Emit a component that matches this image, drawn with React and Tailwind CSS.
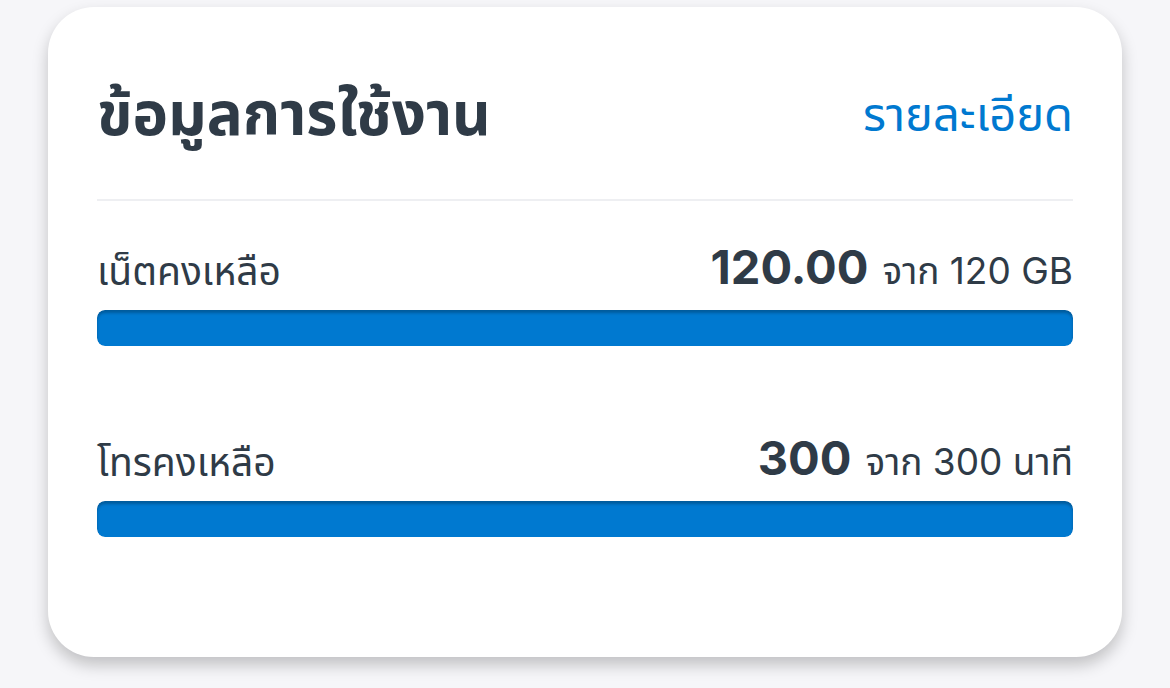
export default function App() {
  const rows = [
    { label: 'เน็ตคงเหลือ', value: '120.00', total: 'จาก 120 GB', pct: 100 },
    { label: 'โทรคงเหลือ', value: '300', total: 'จาก 300 นาที', pct: 100 },
  ];

  return (
    <div
      className="w-[1170px] h-[688px] bg-[#f6f6f9] pt-[7px] px-[48px] overflow-hidden"
      style={{ fontFamily: 'Inter, "Noto Sans Thai", "Noto Sans", sans-serif' }}
    >
      <div className="h-[650px] bg-white rounded-[46px] shadow-[0_8px_16px_rgba(0,0,0,0.22)] px-[49px]">
        <div className="flex items-center justify-between h-[194px] pt-[20px] border-b-2 border-[#eeeff2]">
          <h1 className="text-[60px] font-bold text-[#2f3b47] leading-none">ข้อมูลการใช้งาน</h1>
          <a className="text-[47px] text-[#0079d0] leading-none">รายละเอียด</a>
        </div>

        <div className="flex flex-col gap-[88px] pt-[42px]">
          {rows.map((r) => (
            <div key={r.label}>
              <div className="flex items-end justify-between">
                <span className="text-[39px] text-[#2f3b47] leading-none">{r.label}</span>
                <div className="flex items-baseline gap-[14px] text-[#2f3b47]">
                  <span className="text-[47px] font-bold leading-none">{r.value}</span>
                  <span className="text-[37px] leading-none">{r.total}</span>
                </div>
              </div>
              <div className="mt-[20px] h-[36px] rounded-[8px] bg-[#e9edf2] overflow-hidden">
                <div
                  className="h-full rounded-[8px] bg-[#0079d0] shadow-[inset_0_3px_3px_rgba(0,0,0,0.25)]"
                  style={{ width: r.pct + '%' }}
                />
              </div>
            </div>
          ))}
        </div>
      </div>
    </div>
  );
}
